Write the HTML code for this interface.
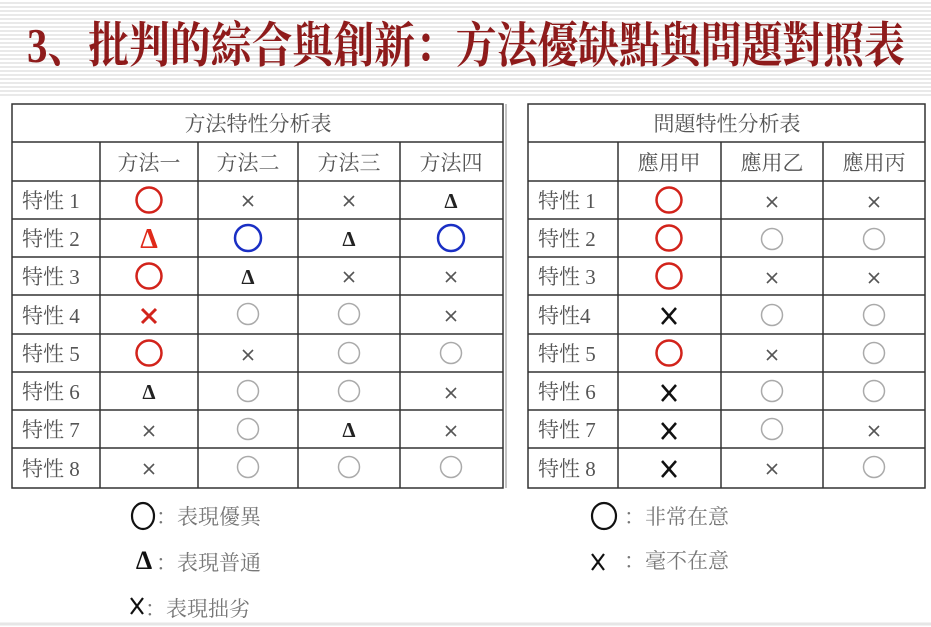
<!DOCTYPE html>
<html><head><meta charset="utf-8"><style>
html,body{margin:0;padding:0;background:#fff;width:931px;height:627px;overflow:hidden}
.stripes{position:absolute;left:0;top:0;width:931px;height:96px;background:repeating-linear-gradient(#fff 0,#fff 2px,#e9e9e9 2px,#e9e9e9 4px)}
svg{position:absolute;left:0;top:0}
text{font-family:"Liberation Serif","Noto Serif CJK SC","Noto Sans CJK TC",serif}
.c{fill:#555;font-size:21px;text-anchor:middle}
.l{fill:#555;font-size:21px}
.g{fill:#777;font-size:21px}
.d{fill:#222;font-size:21px;font-weight:bold;text-anchor:middle}
.dR{fill:#e02a1a;font-size:28px;font-weight:bold;text-anchor:middle}
</style></head><body>
<div class="stripes"></div>
<svg width="931" height="627" viewBox="0 0 931 627">
<defs>
<circle id="oR" r="12.5" fill="none" stroke="#d2231b" stroke-width="2.5"/>
<circle id="oB" r="13" fill="none" stroke="#1a2fc4" stroke-width="2.5"/>
<circle id="oG" r="10.5" fill="none" stroke="#aaa" stroke-width="1.5"/>
<g id="xs" stroke="#555" stroke-width="1.6"><line x1="-5" y1="-5" x2="5" y2="5"/><line x1="5" y1="-5" x2="-5" y2="5"/></g>
<g id="xR" stroke="#d2231b" stroke-width="3"><line x1="-7" y1="-7" x2="7" y2="7"/><line x1="7" y1="-7" x2="-7" y2="7"/></g>
<g id="XB" stroke="#111" stroke-width="2.5"><line x1="-7" y1="-8" x2="7" y2="8"/><line x1="7" y1="-8" x2="-7" y2="8"/></g>
</defs>
<text x="466" y="62" font-size="44" font-weight="bold" fill="#8e1b1b" text-anchor="middle" textLength="878" lengthAdjust="spacingAndGlyphs" transform="translate(0,-6) scale(1,1.1)">3、批判的綜合與創新：方法優缺點與問題對照表</text>

<g stroke="#333" stroke-width="1.5" fill="none">
<rect x="12" y="104" width="491" height="384"/>
<rect x="528" y="104" width="397" height="384"/>
<line x1="506" y1="104" x2="506" y2="488" stroke="#888" stroke-width="1"/>
<line x1="12" y1="142" x2="503" y2="142"/><line x1="528" y1="142" x2="925" y2="142"/>
<line x1="12" y1="181" x2="503" y2="181"/><line x1="528" y1="181" x2="925" y2="181"/>
<line x1="12" y1="219" x2="503" y2="219"/><line x1="528" y1="219" x2="925" y2="219"/>
<line x1="12" y1="257" x2="503" y2="257"/><line x1="528" y1="257" x2="925" y2="257"/>
<line x1="12" y1="295" x2="503" y2="295"/><line x1="528" y1="295" x2="925" y2="295"/>
<line x1="12" y1="334" x2="503" y2="334"/><line x1="528" y1="334" x2="925" y2="334"/>
<line x1="12" y1="372" x2="503" y2="372"/><line x1="528" y1="372" x2="925" y2="372"/>
<line x1="12" y1="410" x2="503" y2="410"/><line x1="528" y1="410" x2="925" y2="410"/>
<line x1="12" y1="448" x2="503" y2="448"/><line x1="528" y1="448" x2="925" y2="448"/>
<line x1="100" y1="142" x2="100" y2="488"/><line x1="198" y1="142" x2="198" y2="488"/>
<line x1="298" y1="142" x2="298" y2="488"/><line x1="400" y1="142" x2="400" y2="488"/>
<line x1="618" y1="142" x2="618" y2="488"/><line x1="721" y1="142" x2="721" y2="488"/>
<line x1="823" y1="142" x2="823" y2="488"/>
</g>

<text class="c" x="258" y="131">方法特性分析表</text>
<text class="c" x="727" y="131">問題特性分析表</text>
<text class="c" x="149" y="170">方法一</text><text class="c" x="248" y="170">方法二</text>
<text class="c" x="349" y="170">方法三</text><text class="c" x="451" y="170">方法四</text>
<text class="c" x="669" y="170">應用甲</text><text class="c" x="772" y="170">應用乙</text><text class="c" x="874" y="170">應用丙</text>

<text class="l" x="22" y="208">特性 1</text><text class="l" x="22" y="246">特性 2</text>
<text class="l" x="22" y="284">特性 3</text><text class="l" x="22" y="323">特性 4</text>
<text class="l" x="22" y="361">特性 5</text><text class="l" x="22" y="399">特性 6</text>
<text class="l" x="22" y="437">特性 7</text><text class="l" x="22" y="476">特性 8</text>
<text class="l" x="538" y="208">特性 1</text><text class="l" x="538" y="246">特性 2</text>
<text class="l" x="538" y="284">特性 3</text><text class="l" x="538" y="323">特性4</text>
<text class="l" x="538" y="361">特性 5</text><text class="l" x="538" y="399">特性 6</text>
<text class="l" x="538" y="437">特性 7</text><text class="l" x="538" y="476">特性 8</text>

<!-- left -->
<use href="#oR" x="149" y="200"/><use href="#xs" x="248" y="201"/><use href="#xs" x="349" y="201"/><text class="d" x="451" y="208">Δ</text>
<text class="dR" x="149" y="248">Δ</text><use href="#oB" x="248" y="238"/><text class="d" x="349" y="246">Δ</text><use href="#oB" x="451" y="238"/>
<use href="#oR" x="149" y="276"/><text class="d" x="248" y="284">Δ</text><use href="#xs" x="349" y="277"/><use href="#xs" x="451" y="277"/>
<use href="#xR" x="149" y="316"/><use href="#oG" x="248" y="314"/><use href="#oG" x="349" y="314"/><use href="#xs" x="451" y="316"/>
<use href="#oR" x="149" y="353"/><use href="#xs" x="248" y="355"/><use href="#oG" x="349" y="353"/><use href="#oG" x="451" y="353"/>
<text class="d" x="149" y="399">Δ</text><use href="#oG" x="248" y="391"/><use href="#oG" x="349" y="391"/><use href="#xs" x="451" y="393"/>
<use href="#xs" x="149" y="431"/><use href="#oG" x="248" y="429"/><text class="d" x="349" y="437">Δ</text><use href="#xs" x="451" y="431"/>
<use href="#xs" x="149" y="469"/><use href="#oG" x="248" y="467"/><use href="#oG" x="349" y="467"/><use href="#oG" x="451" y="467"/>
<!-- right -->
<use href="#oR" x="669" y="200"/><use href="#xs" x="772" y="202"/><use href="#xs" x="874" y="202"/>
<use href="#oR" x="669" y="238"/><use href="#oG" x="772" y="239"/><use href="#oG" x="874" y="239"/>
<use href="#oR" x="669" y="276"/><use href="#xs" x="772" y="278"/><use href="#xs" x="874" y="278"/>
<use href="#XB" x="669" y="316"/><use href="#oG" x="772" y="315"/><use href="#oG" x="874" y="315"/>
<use href="#oR" x="669" y="353"/><use href="#xs" x="772" y="355"/><use href="#oG" x="874" y="353"/>
<use href="#XB" x="669" y="393"/><use href="#oG" x="772" y="391"/><use href="#oG" x="874" y="391"/>
<use href="#XB" x="669" y="431"/><use href="#oG" x="772" y="429"/><use href="#xs" x="874" y="431"/>
<use href="#XB" x="669" y="469"/><use href="#xs" x="772" y="469"/><use href="#oG" x="874" y="467"/>

<!-- legend -->
<ellipse cx="143" cy="516" rx="11" ry="13" fill="none" stroke="#111" stroke-width="2.2"/>
<text class="g" x="156" y="524">：表現優異</text>
<text x="144" y="569" font-size="26" font-weight="bold" fill="#111" text-anchor="middle">Δ</text>
<text class="g" x="156" y="570">：表現普通</text>
<g stroke="#111" stroke-width="2.2"><line x1="131" y1="598" x2="143" y2="614"/><line x1="143" y1="598" x2="131" y2="614"/></g>
<text class="g" x="145" y="616">：表現拙劣</text>

<ellipse cx="604" cy="516" rx="12" ry="13" fill="none" stroke="#111" stroke-width="2.2"/>
<text class="g" x="624" y="524">：非常在意</text>
<g stroke="#111" stroke-width="2.2"><line x1="592" y1="554" x2="604" y2="570"/><line x1="604" y1="554" x2="592" y2="570"/></g>
<text class="g" x="624" y="568">：毫不在意</text>
<line x1="0" y1="624" x2="931" y2="624" stroke="#e6e6e6" stroke-width="3"/>
</svg>
</body></html>
